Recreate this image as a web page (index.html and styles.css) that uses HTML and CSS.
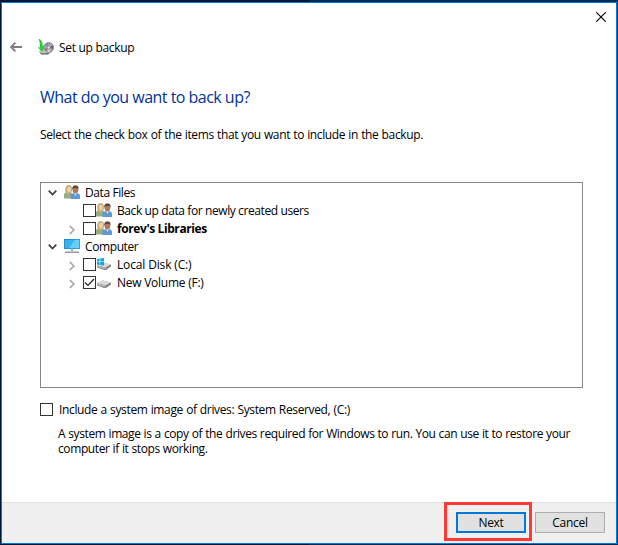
FILE: index.html
```html
<!DOCTYPE html>
<html lang="en">
<head>
<meta charset="utf-8">
<title>Set up backup</title>
<link rel="stylesheet" href="styles.css">
</head>
<body>
<svg class="defs" width="0" height="0" aria-hidden="true">
  <symbol id="users" viewBox="0 0 16 16">
    <path d="M0 14.500V11Q0 8.500 3 8.300H7L9 11V14.500Z" fill="#9bab82"/>
    <path d="M2.500 8L4.500 10.500 6.500 8Z" fill="#e6c29c"/>
    <path d="M1.500 7.500Q.5 1 4.800 1Q8.500 1 8 7L6.500 9H3Z" fill="#c2a66c"/>
    <ellipse cx="5" cy="5.500" rx="2.100" ry="3" fill="#ecd0ae"/>
    <path d="M6.500 15V11.500Q7 9.300 10 9H13Q16 9.500 16 12V15Z" fill="#5f9ad6"/>
    <path d="M10 9L11.500 12 13 9Z" fill="#d9e7f2"/>
    <ellipse cx="11.400" cy="5.600" rx="2.900" ry="4" fill="#a97a5c"/>
    <path d="M8.300 5.500Q8 1.400 11.500 1.400T14.600 5.500L13.500 4H10Z" fill="#5a473b"/>
  </symbol>
  <symbol id="down" viewBox="0 0 9 6"><path d="M.7 .7L4.500 4.500 8.300 .7" fill="none" stroke="#3f3f3f" stroke-width="1.700"/></symbol>
  <symbol id="right" viewBox="0 0 6 10"><path d="M.8 1L4.900 5 .8 9" fill="none" stroke="#a3a3a3" stroke-width="1.700"/></symbol>
  <symbol id="drive" viewBox="0 0 16 16">
    <path d="M1 9.500L6.500 6.500L15 8.500V10.500L10 14H8L1 11.500Z" fill="#858585"/>
    <path d="M1 9.300L6.500 6.500L15 8.300L9.500 11.500Z" fill="#dadada"/>
    <path d="M1 9.300L9.500 11.500V13.200L1 11Z" fill="#b4b4b4"/>
  </symbol>
</svg>
<main class="window">
  <div class="caption">
    <svg class="close" viewBox="0 0 10 10"><path d="M.3 .3L9.700 9.700M9.700 .3L.3 9.700" stroke="#000" stroke-width="1.100"/></svg>
  </div>
  <header class="header">
    <svg class="back" viewBox="0 0 12 10"><path d="M5.400 .7L1.200 5 5.400 9.300M1.200 5H12" fill="none" stroke="#7d7d7d" stroke-width="1.900"/></svg>
    <svg class="app-icon" viewBox="0 0 16 16">
      <path d="M2 10L6 8 14 13 11 15.500H3L1 13Z" fill="#c8c8c8"/>
      <path d="M1.500 13L3 14H11L10 15.500H3Z" fill="#777"/>
      <circle cx="10.700" cy="8.500" r="4.900" fill="#a9a9b3" stroke="#777780" stroke-width=".8"/>
      <path d="M10.700 8.500L7 5.500Q8 4 10 4Z" fill="#7187c8"/>
      <path d="M10.700 8.500L15 6.500V10Z" fill="#67676f"/>
      <path d="M10.700 8.500L6.500 10 8 12Z" fill="#b86272"/>
      <path d="M10.700 8.500L9.500 13H12Z" fill="#dadae2"/>
      <circle cx="10.700" cy="8.500" r="1.500" fill="#eee" stroke="#ad5c68" stroke-width=".7"/>
      <path d="M.8 0Q4.500 1 4.600 7.500L6 6.500 4.300 12.800 .2 8.500 2 8.800Q2.800 4 .8 0Z" fill="#20d52d" stroke="#16a322" stroke-width=".3"/>
    </svg>
    <span class="title">Set up backup</span>
  </header>
  <section class="content">
    <h1>What do you want to back up?</h1>
    <p class="intro">Select the check box of the items that you want to include in the backup.</p>
    <div class="tree">
      <div class="row"><svg class="down"><use href="#down"/></svg><svg class="icon"><use href="#users"/></svg><span>Data Files</span></div>
      <div class="row child"><span class="expander"></span><span class="box"></span><svg class="icon"><use href="#users"/></svg><span>Back up data for newly created users</span></div>
      <div class="row child"><span class="expander"><svg class="right"><use href="#right"/></svg></span><span class="box"></span><svg class="icon"><use href="#users"/></svg><b>forev's Libraries</b></div>
      <div class="row"><svg class="down"><use href="#down"/></svg>
        <svg class="icon" viewBox="0 0 16 16"><path d="M0 1H16V11H0Z" fill="#1687c8"/><path d="M.7 1.700H15.300V10.300H.7Z" fill="#36b3ed"/><path d="M11 1.700H15.300V10.300H5Z" fill="#69cdf5"/><path d="M7 11H9V13H7Z" fill="#9aafba"/><path d="M1 13.500H15V15H1Z" fill="#8c9ba5"/></svg>
        <span>Computer</span></div>
      <div class="row child"><span class="expander"><svg class="right"><use href="#right"/></svg></span><span class="box"></span>
        <svg class="icon" viewBox="0 0 16 16"><use href="#drive"/><path d="M1 3L3.600 2.600V5.500H1ZM4.200 2.500L8 2V5.500H4.200ZM1 6.100H3.600V9L1 8.600ZM4.200 6.100H8V9.600L4.200 9.100Z" fill="#12a8e8"/></svg>
        <span class="t-local">Local Disk (C:)</span></div>
      <div class="row child"><span class="expander"><svg class="right"><use href="#right"/></svg></span><span class="box"><svg class="check" viewBox="0 0 11 11"><path d="M1 5.500L4 8.500 10 2" fill="none" stroke="#222" stroke-width="1.200"/></svg></span><svg class="icon"><use href="#drive"/></svg><span class="t-volume">New Volume (F:)</span></div>
    </div>
    <div class="image-option"><span class="box"></span><span class="t-include">Include a system image of drives: System Reserved, (C:)</span></div>
    <p class="note">A system image is a copy of the drives required for Windows to run. You can use it to restore your<br>computer if it stops working.</p>
  </section>
  <footer class="footer">
    <div class="highlight"><button class="next">Next</button></div>
    <button class="cancel">Cancel</button>
  </footer>
</main>
</body>
</html>
```
FILE: styles.css
```css
* { box-sizing: border-box; }
html, body { margin: 0; height: 100%; }
body {
  padding: 2px 1px 1px;
  background: linear-gradient(90deg, #021a38 0 50%, #042c58 50%);
  color: #000;
  font: 12px/15px "Open Sans", "Noto Sans", sans-serif;
  white-space: nowrap;
  overflow: hidden;
}
svg { display: block; flex: none; }
.defs { position: absolute; }
.window {
  display: flex;
  flex-direction: column;
  width: 616px;
  height: 542px;
  border: 1px solid #0078d7;
  background: #fff;
}
.caption { display: flex; justify-content: flex-end; height: 34px; padding: 9px 10px 0; }
.close { width: 10px; height: 10px; }
.header { display: flex; align-items: center; height: 20px; padding-left: 8px; }
.back { width: 12px; height: 10px; }
.app-icon { width: 16px; height: 16px; margin-left: 16px; }
.title { margin-left: 5px; letter-spacing: -.3px; }
.content { flex: 1; padding: 29px 33px 0 38px; }
h1 {
  margin: 0;
  color: #003399;
  font-size: 16px;
  line-height: 22px;
  font-weight: 400;
  letter-spacing: -.52px;
}
.intro { margin: 19px 0 0; letter-spacing: -.37px; word-spacing: .43px; }
.tree {
  width: 543px;
  height: 206px;
  margin-top: 40px;
  padding: 0 7px;
  border: 1px solid #828790;
}
.row { display: flex; align-items: center; height: 18px; }
.down { width: 9px; height: 6px; margin: 2px 7px 0 0; }
.icon { width: 16px; height: 16px; margin-right: 5px; }
.child { padding-left: 20px; }
.expander { width: 15px; flex: none; padding-top: 3px; }
.right { width: 6px; height: 10px; margin-left: 1px; }
.box { width: 13px; height: 13px; flex: none; border: 1px solid #333; background: #fff; }
.check { width: 11px; height: 11px; }
.row > span, .row > b { letter-spacing: -.4px; }
.row > .t-local { letter-spacing: -.15px; }
.row > .t-volume { letter-spacing: -.25px; }
.image-option { display: flex; align-items: center; height: 15px; margin-top: 14px; }
.t-include { margin-left: 6px; letter-spacing: -.36px; word-spacing: .43px; }
.note { margin: 9px 0 0 18px; letter-spacing: -.39px; word-spacing: .3px; }
.footer {
  display: flex;
  align-items: flex-start;
  justify-content: flex-end;
  height: 41px;
  padding-right: 11px;
  border-top: 1px solid #dfdfdf;
  background: #f0f0f0;
}
.highlight { width: 88px; height: 39px; margin: -1px 3px 0 0; padding: 7px 3px 0 9px; border: 3px solid #ff3838; }
button {
  display: block;
  width: 70px;
  height: 21px;
  padding: 0;
  border: 1px solid #adadad;
  background: #e1e1e1;
  color: #000;
  font: 12px/15px "Open Sans", "Noto Sans", sans-serif;
  letter-spacing: -.3px;
}
.next { border: 2px solid #0078d7; }
.cancel { margin-top: 9px; }
```
